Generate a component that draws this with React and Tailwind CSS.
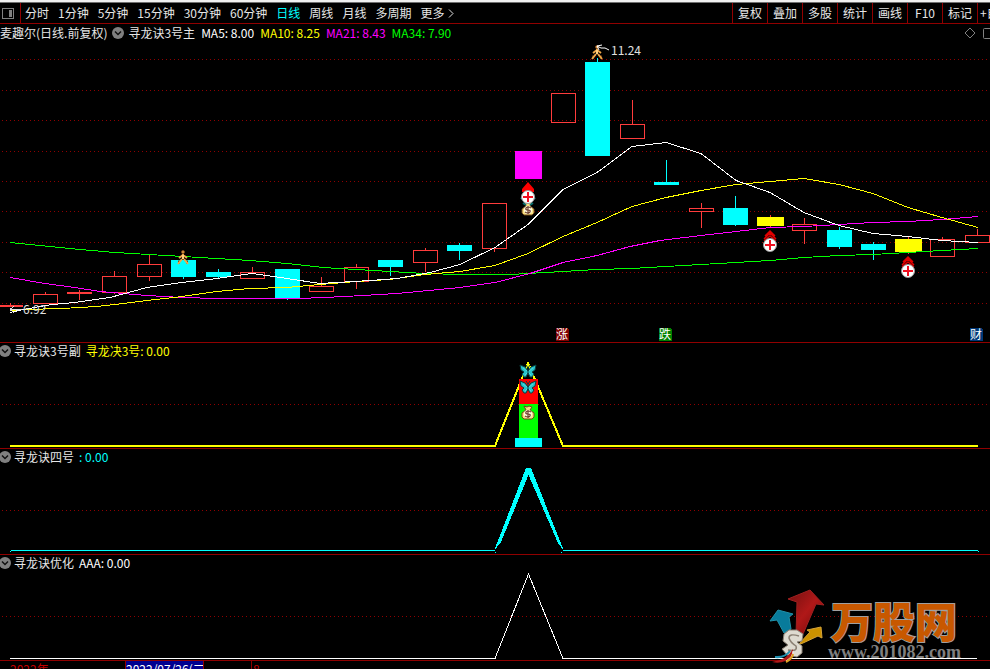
import React from "react";

const periods = ["分时", "1分钟", "5分钟", "15分钟", "30分钟", "60分钟", "日线", "周线", "月线", "多周期", "更多"];
const tools = ["复权", "叠加", "多股", "统计", "画线", "F10", "标记"];

const RED = "#ff3c3c";
const CYAN = "#00ffff";

// [left, width, bodyTop, bodyBottom, wickTop, wickBottom, kind]
const candles = [
  [-2, 25, 305, 306, 303, 306, "flat"],
  [33, 25, 294, 303, 292, 303, "up"],
  [67, 25, 292, 293, 290, 299, "flat"],
  [102, 25, 276, 292, 271, 293, "up"],
  [137, 25, 264, 276, 254, 280, "up"],
  [171, 25, 260, 276, 260, 278, "down"],
  [206, 25, 272, 276, 269, 278, "down"],
  [240, 25, 272, 278, 267, 278, "up"],
  [275, 25, 269, 297, 269, 299, "down"],
  [309, 25, 286, 291, 277, 291, "up"],
  [344, 25, 267, 281, 264, 288, "up"],
  [378, 25, 260, 266, 260, 275, "down"],
  [413, 25, 250, 262, 248, 271, "up"],
  [447, 25, 245, 250, 243, 259, "down"],
  [482, 25, 203, 248, 203, 251, "up"],
  [515, 27, 151, 178, 151, 178, "magenta"],
  [551, 25, 93, 122, 93, 122, "up"],
  [585, 25, 62, 155, 58, 155, "down"],
  [620, 25, 124, 138, 100, 138, "up"],
  [654, 25, 182, 184, 160, 184, "down"],
  [689, 25, 208, 211, 203, 227, "up"],
  [723, 25, 208, 224, 196, 225, "down"],
  [757, 27, 217, 225, 215, 227, "yellow"],
  [792, 25, 224, 230, 218, 243, "up"],
  [827, 25, 230, 246, 227, 248, "down"],
  [861, 25, 244, 249, 242, 259, "down"],
  [895, 27, 239, 251, 237, 253, "yellow"],
  [930, 25, 239, 256, 237, 256, "up"],
  [965, 25, 235, 242, 229, 242, "up"],
];

const fills = { down: CYAN, flat: RED, magenta: "#ff00ff", yellow: "#ffff00" };

const averages = [
  ["#00ff00", "10,242 50,246 80,249 115,252 183,256 250,260 287,263 323,267 356,269 390,271 425,273 460,274 510,274 563,271 597,269 632,268 666,266 701,264 736,262 770,260 804,257 839,255 873,254 908,252 942,250 978,248"],
  ["#ff00ff", "10,277 45,283 75,287 100,291 147,295 182,297 217,298 300,298 345,296 397,293 460,287 495,282 530,273 563,262 597,255 630,246 660,240 701,235 736,231 770,227 804,226 839,224 873,222 908,221 942,219 978,216"],
  ["#ffff00", "10,310 25,309 62,308 97,306 115,304 147,300 182,296 217,291 250,288 287,287 320,284 356,281 390,279 425,274 460,271 495,265 528,253 563,236 597,222 632,206 666,197 701,190 736,184 770,181 804,178 839,184 873,193 908,207 942,217 978,227"],
  ["#ffffff", "10,312 23,309 52,304 75,302 110,297 147,287 182,282 217,278 252,273 287,278 320,283 370,280 397,278 430,272 460,264 495,247 528,224 563,189 597,172 632,146 666,142 701,153 736,180 770,192 804,212 839,225 873,233 908,236 942,240 978,242"],
];

function Candle({ data }) {
  const [x, w, top, bottom, high, low, kind] = data;
  const mid = x + Math.floor(w / 2);
  if (kind === "up") {
    return (
      <g fill={RED}>
        <rect x={x + 0.5} y={top + 0.5} width={w - 1} height={bottom - top} fill="none" stroke={RED} />
        <rect x={mid} y={high} width="1" height={top - high} />
        <rect x={mid} y={bottom} width="1" height={low - bottom + 1} />
      </g>
    );
  }
  return (
    <g fill={fills[kind]}>
      <rect x={mid} y={high} width="1" height={low - high + 1} fill={kind === "yellow" ? RED : fills[kind]} />
      <rect x={x} y={top} width={w} height={bottom - top + 1} />
    </g>
  );
}

function GridLine({ y }) {
  return <line x1="2" x2="988" y1={y + 0.5} y2={y + 0.5} stroke="#900000" strokeDasharray="1 3" />;
}

function Person({ x, y }) {
  return (
    <g transform={`translate(${x} ${y})`} stroke="#f0a848" fill="none">
      <path d="M-5 5H-3M3 5H5" stroke="#6b3a10" strokeWidth="3" />
      <circle cx="0" cy="-5" r="1.5" fill="#f0a848" stroke="#7a4518" />
      <path d="M0-3V2M-1 2L-5 7M1 2L5 7M-4 1L0-2L4 1" strokeWidth="2" />
      <path d="M0-2V2" stroke="#ffd080" strokeWidth="2" />
    </g>
  );
}

function Rocket({ x, y, solid }) {
  return (
    <g transform={`translate(${x} ${y})`}>
      {solid ? (
        <path d="M0-15L6-8V-5H-6V-8Z" fill="#ff0000" />
      ) : (
        <path d="M-6-6L0-12L6-6M-5-9L0-14L5-9M-6-4L0-9L6-4" fill="none" stroke="#e00000" strokeWidth="1.5" />
      )}
      {solid && <path d="M-7 2L-5-1M7 2L5-1M-5 6L-2 8M5 6L2 8" stroke="#087070" strokeWidth="2" />}
      <circle r="6.5" fill="#fff" stroke="#999" />
      <path d="M-5 0H4M0-5V5M0 0H5" stroke="#f01020" strokeWidth="2" />
    </g>
  );
}

function Bag({ x, y }) {
  return (
    <g transform={`translate(${x} ${y})`}>
      <path d="M-4-7L-1-6L1-7L4-6L2-3L6 0V4L4 6H-4L-6 4V0L-2-3Z" fill="#f8e080" stroke="#70481c" />
      <ellipse cy="1" rx="4" ry="4" fill="#fffbe0" />
      <path d="M3-1Q0-3-2-1Q-3 1 0 1Q3 1 2 3Q0 5-3 3M0-3V5" fill="none" stroke="#704030" strokeWidth="1.2" />
    </g>
  );
}

function Butterfly({ x, y }) {
  return (
    <g transform={`translate(${x} ${y})`} stroke="#084040">
      <path d="M0 0L-3-4L-8-6L-7-1L-4 1L-6 3L-4 6L-2 6L0 2L2 6L4 6L6 3L4 1L7-1L8-6L3-4Z" fill="#28c4cc" />
      <path d="M-5-3L-1 0M5-3L1 0M-3 4L-1 2M3 4L1 2" stroke="#50dce0" />
      <path d="M0-3V4M0-3L-2-6M0-3L2-6" fill="none" />
    </g>
  );
}

function Badge({ x, color, children }) {
  return (
    <g>
      <path d={`M${x} 328h11l2 2v11h-13z`} fill={color} />
      <text x={x} y="339" fontSize="12" fill="#fff">{children}</text>
    </g>
  );
}

function Collapse({ label }) {
  return (
    <button aria-label={label} className="shrink-0">
      <svg className="block size-3" viewBox="0 0 12 12">
        <circle cx="6" cy="6" r="6" fill="#808080" />
        <path d="M3 4.5L6 7.5L9 4.5" fill="none" stroke="#101010" strokeWidth="1.5" />
      </svg>
    </button>
  );
}

function SubPanel({ title, value, color, top, children, overlay }) {
  return (
    <section className="relative border-b border-[#900000]">
      <header className="-ml-px flex h-4 items-center whitespace-nowrap">
        <Collapse label={title} />
        <h2 className="ml-[3px]">{title}</h2>
        <span className={"ml-[5px] " + color}>{value}</span>
      </header>
      <svg className="block h-auto w-full" viewBox={`0 ${top} 990 89`} shapeRendering="crispEdges" role="img" aria-label={title}>
        <GridLine y={top + 45} />
        {children}
      </svg>
      {overlay}
    </section>
  );
}

function Logo() {
  return (
    <svg className="absolute right-[22px] top-[33px] z-10 h-[80px] w-[200px]" viewBox="768 588 200 80" role="img" aria-label="万股网">
      <defs>
        <linearGradient id="redArrow" x1="0" y1="0" x2="1" y2="1">
          <stop offset="0" stopColor="#701010" />
          <stop offset=".5" stopColor="#b01818" />
          <stop offset="1" stopColor="#700808" />
        </linearGradient>
      </defs>
      <path d="M810 590L824 605L816 604L803 634H796L797 602L788 599Z" fill="url(#redArrow)" stroke="#a02020" />
      <path d="M778 610L793 614L789 617L791 629L784 633L777 620L770 621Z" fill="#087b9b" stroke="#2090a8" />
      <path d="M821 627L822 638L818 636L803 643L798 645L810 632L807 630Z" fill="#cc9200" stroke="#d6a33a" />
      <path d="M784 634L789 630L797 630L803 634L802 641L797 642L802 646V653L797 657L787 655L782 649L788 645L783 641Z" fill="#dedad0" stroke="#8b8074" />
      <path d="M799 636Q789 633 789 638Q790 642 796 646Q798 652 788 650" fill="none" stroke="#8b8074" strokeWidth="1.5" />
      <path d="M793 649Q787 660 772 662Q783 665 793 656Z" fill="#b01818" />
      <path d="M790 651Q785 658 775 657" fill="none" stroke="#2090b0" strokeWidth="2" />
      <path d="M793 651Q793 657 786 661" fill="none" stroke="#fff" strokeWidth="1" />
      <path d="M793 654Q792 659 786 662" fill="none" stroke="#dda020" strokeWidth="2" />
      <text x="831" y="638" fontSize="42" fontWeight="900" fill="#c85800" stroke="#a0a0a0" strokeWidth="2" paintOrder="stroke">万股网</text>
      <text x="828" y="658" fontSize="18" fontWeight="700" fill="#808080" className="font-['Liberation_Serif',serif]">www.201082.com</text>
    </svg>
  );
}

export default function App() {
  return (
    <main className="min-h-screen overflow-hidden bg-black font-['Noto_Sans_CJK_SC',sans-serif] text-[12px] leading-4 text-[#e6e6e6]">
      <div className="h-[3px] border-b border-[#707070] bg-[#f0f0f0]" />
      <nav className="flex h-[21px] items-stretch whitespace-nowrap border-b border-[#900000]">
        <button aria-label="侧栏" className="flex w-[21px] shrink-0 items-center border-r border-[#900000] pl-[2px]">
          <svg className="block h-[11px] w-3" viewBox="0 0 12 11" shapeRendering="crispEdges">
            <rect x=".5" y=".5" width="11" height="10" rx="1" fill="none" stroke="#808080" />
            <rect x="7" y="2" width="3" height="7" fill="#808080" />
          </svg>
        </button>
        <div className="ml-1 flex items-center gap-[9px]">
          {periods.map((p) => (
            <button key={p} className={p === "日线" ? "text-[#00ffff]" : "flex items-center"}>
              {p}
              {p === "更多" && (
                <svg className="ml-1 block h-[9px] w-[6px]" viewBox="0 0 6 9">
                  <path d="M1 .5L5 4.5L1 8.5" fill="none" stroke="#e0e0e0" />
                </svg>
              )}
            </button>
          ))}
        </div>
        <div className="ml-auto flex">
          {tools.map((t) => (
            <button key={t} className="w-[35px] border-l border-[#900000]">{t}</button>
          ))}
          <button className="w-[13px] overflow-hidden border-l border-[#900000] pl-[2px] text-left">+自选</button>
        </div>
      </nav>

      <section className="border-b border-[#900000]">
        <header className="flex h-5 items-center whitespace-nowrap pb-[2px]">
          <h1>麦趣尔(日线.前复权)</h1>
          <span className="ml-[5px] flex"><Collapse label="主图指标" /></span>
          <h2 className="ml-1">寻龙诀3号主</h2>
          <div className="ml-[6px] flex gap-[6px]">
            <span className="text-white">MA5: 8.00</span>
            <span className="text-[#ffff00]">MA10: 8.25</span>
            <span className="text-[#ff00ff]">MA21: 8.43</span>
            <span className="text-[#00ff00]">MA34: 7.90</span>
          </div>
          <svg className="ml-auto block h-3 w-[26px]" viewBox="0 0 26 12" fill="none" stroke="#808080">
            <path d="M6 1L11 6L6 11L1 6Z" />
            <rect x="19.5" y="1.5" width="10" height="10" rx="1" />
          </svg>
        </header>
        <svg className="block h-auto w-full" viewBox="0 44 990 298" shapeRendering="crispEdges" role="img" aria-label="日线K线图">
          {[59, 90, 120, 151, 181, 211, 242, 272, 303].map((y) => <GridLine key={y} y={y} />)}
          {candles.map((c) => <Candle key={c[0]} data={c} />)}
          {averages.map(([color, points]) => (
            <polyline key={color} points={points} transform="translate(0 .5)" fill="none" stroke={color} />
          ))}
          <path d="M10 309.500L22 309.500M10 309.500L14 306.500M10 309.500L14 312.500" fill="none" stroke="#e0e0e0" />
          <text x="23" y="314" fontSize="12" fill="#e0e0e0">6.92</text>
          <g shapeRendering="auto">
            <Person x={183} y={257} />
            <Person x={597} y={52} />
            <Bag x={528} y={209} />
            <Rocket x={528} y={197} solid />
            <Rocket x={770} y={245} />
            <Rocket x={908} y={271} />
            <path d="M597 46L601 48L605 48L609 50M597 46L602 45M597 46L599 50" fill="none" stroke="#fff" />
          </g>
          <text x="611" y="55" fontSize="12" fill="#e0e0e0">11.24</text>
          <Badge x={556} color="#800000">涨</Badge>
          <Badge x={659} color="#008000">跌</Badge>
          <Badge x={970} color="#003878">财</Badge>
        </svg>
      </section>

      <SubPanel title="寻龙诀3号副" value="寻龙决3号: 0.00" color="text-[#ffff00]" top={359}>
        <path d="M10 446H495L528 363L563 446H978" fill="none" stroke="#ffff00" strokeWidth="2" />
        <rect x="519" y="379" width="19" height="25" fill="#ff0000" />
        <rect x="519" y="404" width="19" height="34" fill="#00ff00" />
        <rect x="515" y="438" width="27" height="9" fill={CYAN} />
        <g shapeRendering="auto">
          <Butterfly x={528} y={371} />
          <Butterfly x={528} y={387} />
          <Bag x={528} y={413} />
        </g>
      </SubPanel>
      <SubPanel title="寻龙诀四号" value=": 0.00" color="text-[#00ffff]" top={465}>
        <path d="M11 550.500H495M563 550.500H978" stroke={CYAN} />
        <path d="M10 551h1v1h-1zM495 552h1v1h-1zM561 552h1v1h-1zM978 551h1v1h-1z" fill={CYAN} />
        <path d="M494 551L526 468H531L564 551L558 543L528.500 475L501 542Z" fill={CYAN} />
      </SubPanel>
      <SubPanel title="寻龙诀优化" value="AAA: 0.00" color="text-white" top={571} overlay={<Logo />}>
        <path d="M10 658.500H495L528.500 574L563 658.500H977" fill="none" stroke="#fff" />
      </SubPanel>

      <footer className="flex h-2 overflow-hidden text-[#c00000]">
        <span className="w-[125px] shrink-0 pl-[10px]">2022年</span>
        <time className="h-4 w-[79px] shrink-0 overflow-hidden whitespace-nowrap border-x border-[#900000] bg-[#000090] text-white">2022/07/26(二)</time>
        <span className="ml-[47px] h-4 border-l border-[#900000] pl-px">8</span>
      </footer>
    </main>
  );
}
